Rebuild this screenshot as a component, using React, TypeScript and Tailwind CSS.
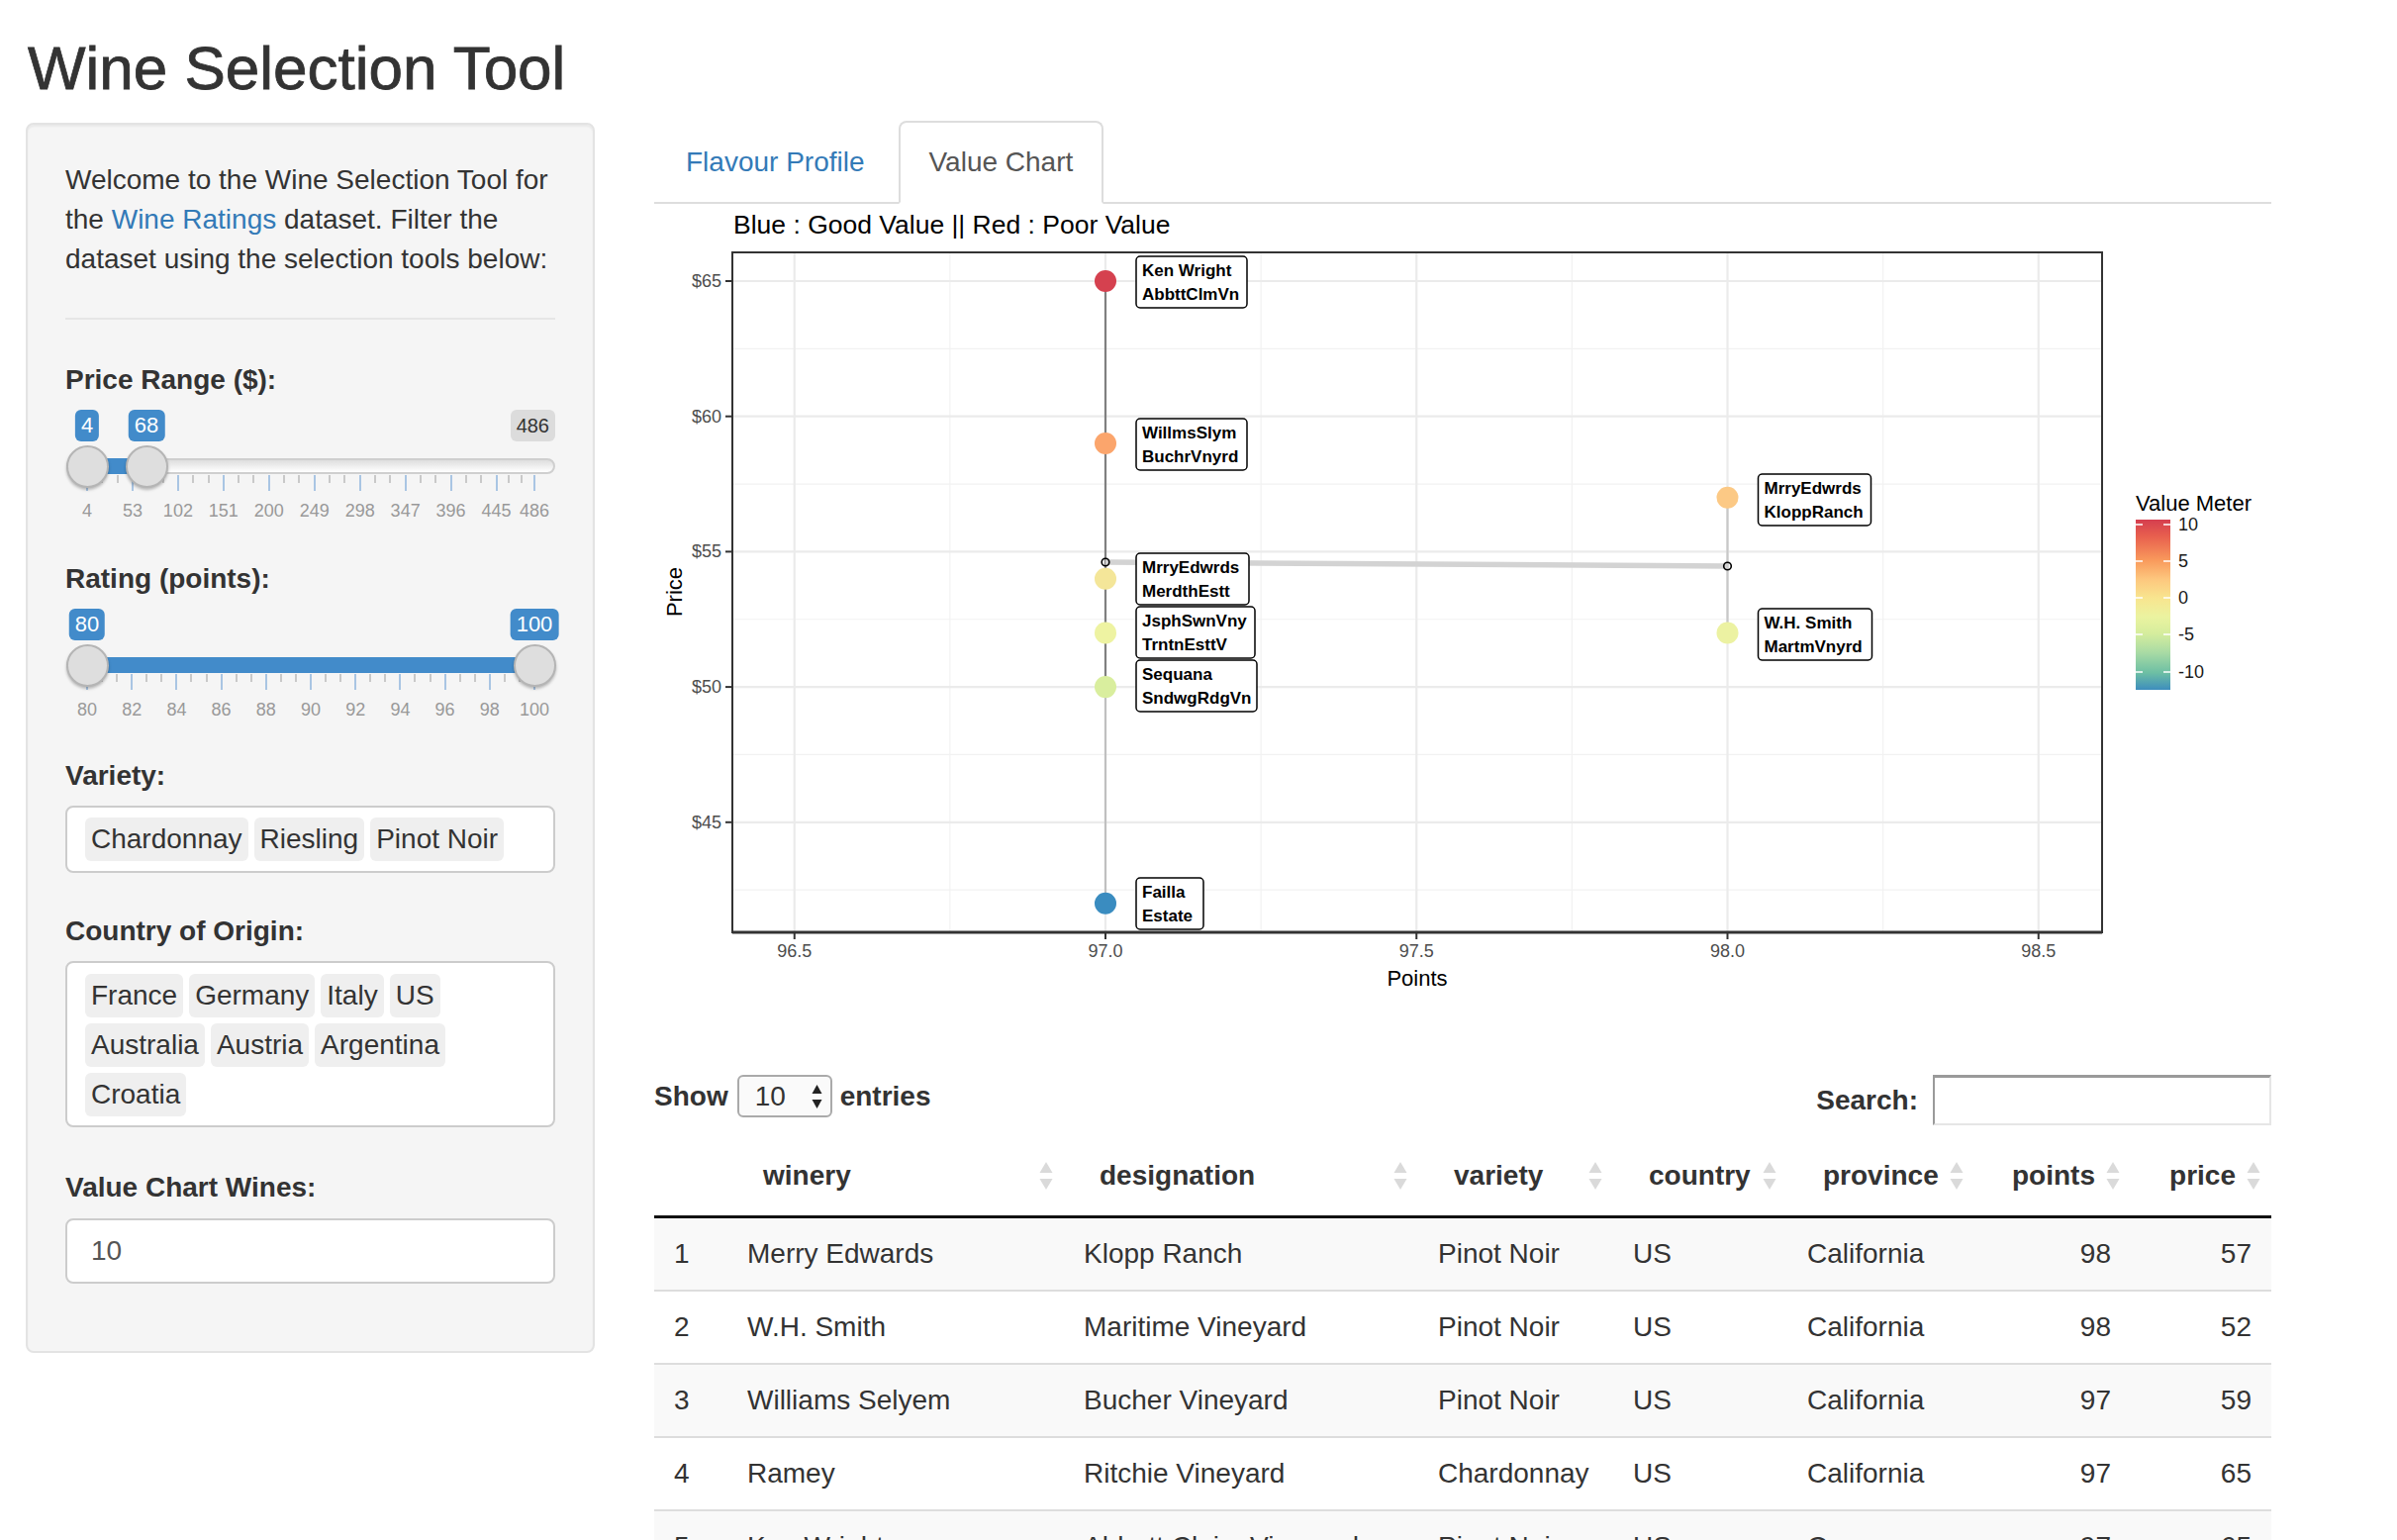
import React from "react";

function Handle({ left }: { left: number }) {
  return (
    <div
      className="absolute top-[36px] w-[43px] h-[43px] rounded-full bg-[#dedede] border-2 border-[#b5b5b5] shadow-[0_2px_3px_rgba(0,0,0,0.25)]"
      style={{ left: left - 21.5 }}
    />
  );
}

function RangeSlider({
  min,
  max,
  from,
  to,
  ticks,
  showMax,
}: {
  min: number;
  max: number;
  from: number;
  to: number;
  ticks: number[];
  showMax?: boolean;
}) {
  const pos = (v: number) => 22 + ((v - min) / (max - min)) * 452;
  const smalls: number[] = [];
  for (let i = 0; i < ticks.length - 1; i++) {
    const a = pos(ticks[i]);
    const b = pos(ticks[i + 1]);
    smalls.push(a + (b - a) / 3, a + (2 * (b - a)) / 3);
  }
  return (
    <div className="relative h-[120px] w-[495px]">
      <div className="absolute left-[1px] w-[494px] top-[49px] h-[16px] rounded-full border-2 border-[#cfcfcf] bg-linear-to-b from-[#dedede] to-white" />
      <div
        className="absolute top-[49px] h-[16px] bg-[#428bca]"
        style={{ left: pos(from), width: pos(to) - pos(from) }}
      />
      {ticks.map((t) => (
        <div
          key={"b" + t}
          className="absolute top-[66px] h-[16px] w-[2px] bg-[#a9c5e3]"
          style={{ left: pos(t) - 1 }}
        />
      ))}
      {smalls.map((s, i) => (
        <div
          key={"s" + i}
          className="absolute top-[66px] h-[8px] w-[2px] bg-[#c9c9c9]"
          style={{ left: s - 1 }}
        />
      ))}
      {showMax && (
        <div className="absolute top-0 right-0 h-[32px] px-[6px] rounded-[6px] bg-[rgba(0,0,0,0.1)] text-[#333] text-[20px] leading-[32px]">
          {max}
        </div>
      )}
      <div
        className="absolute top-0 h-[32px] px-[6px] rounded-[6px] bg-[#428bca] text-white text-[22px] leading-[32px] -translate-x-1/2"
        style={{ left: pos(from) }}
      >
        {from}
      </div>
      <div
        className="absolute top-0 h-[32px] px-[6px] rounded-[6px] bg-[#428bca] text-white text-[22px] leading-[32px] -translate-x-1/2"
        style={{ left: pos(to) }}
      >
        {to}
      </div>
      <Handle left={pos(from)} />
      <Handle left={pos(to)} />
      {ticks.map((t) => (
        <div
          key={"l" + t}
          className="absolute top-[91px] text-[18px] leading-[22px] text-[#999] -translate-x-1/2"
          style={{ left: pos(t) }}
        >
          {t}
        </div>
      ))}
    </div>
  );
}

function Chip({ children }: { children: React.ReactNode }) {
  return (
    <span className="inline-block bg-[#efefef] rounded-[6px] px-[6px] py-[2px] mr-[6px] mb-[6px] leading-[40px] text-[#333]">
      {children}
    </span>
  );
}

function Label({ children, mb }: { children: React.ReactNode; mb: string }) {
  return <div className={"font-bold h-[40px] " + mb}>{children}</div>;
}

function Sidebar() {
  return (
    <div className="mt-[2px] w-[575px] shrink-0 bg-[#f5f5f5] border-2 border-[#e3e3e3] rounded-[8px] shadow-[inset_0_2px_2px_rgba(0,0,0,0.05)] px-[38px] pt-[36px] pb-[68px]">
      <p>
        Welcome to the Wine Selection Tool for the{" "}
        <span className="text-[#337ab7]">Wine Ratings</span> dataset. Filter
        the dataset using the selection tools below:
      </p>
      <hr className="mt-[39px] mb-[41px] border-0 border-t-2 border-[#e6e6e6]" />
      <Label mb="mb-[10px]">Price Range ($):</Label>
      <div className="mb-[31px]">
        <RangeSlider
          min={4}
          max={486}
          from={4}
          to={68}
          ticks={[4, 53, 102, 151, 200, 249, 298, 347, 396, 445, 486]}
          showMax
        />
      </div>
      <Label mb="mb-[10px]">Rating (points):</Label>
      <div className="mb-[29px]">
        <RangeSlider
          min={80}
          max={100}
          from={80}
          to={100}
          ticks={[80, 82, 84, 86, 88, 90, 92, 94, 96, 98, 100]}
        />
      </div>
      <Label mb="mb-[10px]">Variety:</Label>
      <div className="mb-[39px] border-2 border-[#ccc] rounded-[8px] bg-white pt-[10px] pb-[4px] pl-[18px] pr-[14px] flex flex-wrap">
        <Chip>Chardonnay</Chip>
        <Chip>Riesling</Chip>
        <Chip>Pinot Noir</Chip>
      </div>
      <Label mb="mb-[10px]">Country of Origin:</Label>
      <div className="mb-[41px] border-2 border-[#ccc] rounded-[8px] bg-white pt-[11px] pb-[3px] pl-[18px] pr-[14px] flex flex-wrap">
        <Chip>France</Chip>
        <Chip>Germany</Chip>
        <Chip>Italy</Chip>
        <Chip>US</Chip>
        <Chip>Australia</Chip>
        <Chip>Austria</Chip>
        <Chip>Argentina</Chip>
        <Chip>Croatia</Chip>
      </div>
      <Label mb="mb-[11px]">Value Chart Wines:</Label>
      <div className="h-[66px] border-2 border-[#ccc] rounded-[8px] bg-white px-[24px] flex items-center text-[#555]">
        10
      </div>
    </div>
  );
}

function Tabs() {
  return (
    <div className="flex h-[84px] border-b-2 border-[#ddd]">
      <div className="h-[84px] mr-[2px] px-[30px] py-[20px] border-2 border-transparent rounded-t-[8px] text-[#337ab7]">
        Flavour Profile
      </div>
      <div className="h-[84px] px-[29px] py-[20px] border-2 border-[#ddd] border-b-white bg-white rounded-t-[8px] text-[#555]">
        Value Chart
      </div>
    </div>
  );
}

type Pt = {
  x: number;
  y: number;
  c: string;
  l1: string;
  l2: string;
  bt: number;
  bw: number;
};

function Chart() {
  const X = (p: number) => 456 + (p - 97) * 628.5;
  const Y = (v: number) => 78 + (65 - v) * 27.34;
  const L = 79,
    R = 1463,
    T = 49,
    B = 736;
  const majorX = [96.5, 97, 97.5, 98, 98.5];
  const minorX = [96.75, 97.25, 97.75, 98.25];
  const majorY = [45, 50, 55, 60, 65];
  const minorY = [42.5, 47.5, 52.5, 57.5, 62.5];
  const pts: Pt[] = [
    { x: 97, y: 65, c: "#d5414f", l1: "Ken Wright", l2: "AbbttClmVn", bt: 53, bw: 112 },
    { x: 97, y: 59, c: "#fba56c", l1: "WillmsSlym", l2: "BuchrVnyrd", bt: 217, bw: 112 },
    { x: 97, y: 54, c: "#f4e699", l1: "MrryEdwrds", l2: "MerdthEstt", bt: 353, bw: 114 },
    { x: 97, y: 52, c: "#eef3a2", l1: "JsphSwnVny", l2: "TrntnEsttV", bt: 407, bw: 120 },
    { x: 97, y: 50, c: "#d9ee9e", l1: "Sequana", l2: "SndwgRdgVn", bt: 461, bw: 122 },
    { x: 97, y: 42, c: "#3a8cc0", l1: "Failla", l2: "Estate", bt: 681, bw: 68 },
    { x: 98, y: 57, c: "#fcc985", l1: "MrryEdwrds", l2: "KloppRanch", bt: 273, bw: 114 },
    { x: 98, y: 52, c: "#ecf2a2", l1: "W.H. Smith", l2: "MartmVnyrd", bt: 409, bw: 115 },
  ];
  const legend = [
    { v: "10", y: 324 },
    { v: "5", y: 361 },
    { v: "0", y: 398 },
    { v: "-5", y: 435 },
    { v: "-10", y: 473 },
  ];
  return (
    <svg width={1634} height={834} className="block">
      <defs>
        <linearGradient id="spectral" x1="0" y1="0" x2="0" y2="1">
          <stop offset="0%" stopColor="#d53e4f" />
          <stop offset="10%" stopColor="#e8604e" />
          <stop offset="24%" stopColor="#f99a5c" />
          <stop offset="35%" stopColor="#fdc77e" />
          <stop offset="46%" stopColor="#f8e58f" />
          <stop offset="57%" stopColor="#ebf3a0" />
          <stop offset="67%" stopColor="#d5ed9d" />
          <stop offset="78%" stopColor="#a9dba4" />
          <stop offset="90%" stopColor="#6dbfa4" />
          <stop offset="100%" stopColor="#3d8dbd" />
        </linearGradient>
      </defs>
      <text x={80} y={30} fontSize={26.5} fill="#000">
        Blue : Good Value || Red : Poor Value
      </text>
      <rect x={L} y={T} width={R - L} height={B - T} fill="#fff" />
      {minorX.map((v) => (
        <line key={"mx" + v} x1={X(v)} x2={X(v)} y1={T} y2={B} stroke="#f2f2f2" strokeWidth={1.2} />
      ))}
      {minorY.map((v) => (
        <line key={"my" + v} x1={L} x2={R} y1={Y(v)} y2={Y(v)} stroke="#f2f2f2" strokeWidth={1.2} />
      ))}
      {majorX.map((v) => (
        <line key={"Mx" + v} x1={X(v)} x2={X(v)} y1={T} y2={B} stroke="#ebebeb" strokeWidth={2.2} />
      ))}
      {majorY.map((v) => (
        <line key={"My" + v} x1={L} x2={R} y1={Y(v)} y2={Y(v)} stroke="#ebebeb" strokeWidth={2.2} />
      ))}
      <line x1={X(97)} x2={X(97)} y1={Y(65)} y2={Y(50)} stroke="#808080" strokeWidth={2.2} />
      <line x1={X(97)} x2={X(97)} y1={Y(50)} y2={Y(42)} stroke="#c0c0c0" strokeWidth={2.2} />
      <line x1={X(98)} x2={X(98)} y1={Y(57)} y2={Y(52)} stroke="#c8c8c8" strokeWidth={2.2} />
      <line x1={X(97)} x2={X(98)} y1={362} y2={366} stroke="#d3d3d3" strokeWidth={5.5} />
      <circle cx={X(97)} cy={362} r={3.8} fill="none" stroke="#000" strokeWidth={1.6} />
      <circle cx={X(98)} cy={366} r={3.8} fill="none" stroke="#000" strokeWidth={1.6} />
      {pts.map((p, i) => (
        <circle key={"p" + i} cx={X(p.x)} cy={Y(p.y)} r={11} fill={p.c} />
      ))}
      {pts.map((p, i) => {
        const bx = X(p.x) + 31;
        return (
          <g key={"lb" + i}>
            <rect x={bx} y={p.bt} width={p.bw} height={52} rx={4} fill="#fff" stroke="#000" strokeWidth={1.5} />
            <text x={bx + 6} y={p.bt + 20} fontSize={17} fontWeight="bold" fill="#000">
              {p.l1}
            </text>
            <text x={bx + 6} y={p.bt + 44} fontSize={17} fontWeight="bold" fill="#000">
              {p.l2}
            </text>
          </g>
        );
      })}
      <rect x={L} y={T} width={R - L} height={B - T} fill="none" stroke="#333" strokeWidth={2} />
      <line x1={L} x2={R} y1={B} y2={B} stroke="#333" strokeWidth={3} />
      {majorY.map((v) => (
        <g key={"yt" + v}>
          <line x1={72} x2={L} y1={Y(v)} y2={Y(v)} stroke="#333" strokeWidth={2} />
          <text x={68} y={Y(v)} fontSize={18} fill="#4d4d4d" textAnchor="end" dominantBaseline="central">
            ${v}
          </text>
        </g>
      ))}
      {majorX.map((v) => (
        <g key={"xt" + v}>
          <line x1={X(v)} x2={X(v)} y1={B} y2={B + 7} stroke="#333" strokeWidth={2} />
          <text x={X(v)} y={755} fontSize={18} fill="#4d4d4d" textAnchor="middle" dominantBaseline="central">
            {v.toFixed(1)}
          </text>
        </g>
      ))}
      <text x={771} y={782} fontSize={22} fill="#000" textAnchor="middle" dominantBaseline="central">
        Points
      </text>
      <text
        transform="translate(20,392) rotate(-90)"
        fontSize={22}
        fill="#000"
        textAnchor="middle"
        dominantBaseline="central"
      >
        Price
      </text>
      <text x={1497} y={302} fontSize={22} fill="#000" dominantBaseline="central">
        Value Meter
      </text>
      <rect x={1497} y={319} width={35} height={172} fill="url(#spectral)" />
      {legend.map((l) => (
        <g key={"lg" + l.v}>
          <line x1={1497} x2={1504} y1={l.y} y2={l.y} stroke="#fff" strokeWidth={1.5} />
          <line x1={1525} x2={1532} y1={l.y} y2={l.y} stroke="#fff" strokeWidth={1.5} />
          <text x={1540} y={l.y} fontSize={18} fill="#1a1a1a" dominantBaseline="central">
            {l.v}
          </text>
        </g>
      ))}
    </svg>
  );
}

function SortIcon() {
  return (
    <svg width="16" height="32" viewBox="0 0 16 32" className="shrink-0">
      <path d="M8 2 L14.5 13 L1.5 13 Z" fill="#dadada" />
      <path d="M8 30 L14.5 19 L1.5 19 Z" fill="#dadada" />
    </svg>
  );
}

function Th({ label, right }: { label: string; right?: boolean }) {
  return (
    <th className={"h-[80px] py-[20px] pr-[10px] font-bold align-middle " + (right ? "pl-[10px]" : "pl-[36px]")}>
      <div className={"flex items-center " + (right ? "justify-end gap-[10px]" : "justify-between")}>
        <span className="leading-[40px]">{label}</span>
        <SortIcon />
      </div>
    </th>
  );
}

const rows = [
  ["1", "Merry Edwards", "Klopp Ranch", "Pinot Noir", "US", "California", "98", "57"],
  ["2", "W.H. Smith", "Maritime Vineyard", "Pinot Noir", "US", "California", "98", "52"],
  ["3", "Williams Selyem", "Bucher Vineyard", "Pinot Noir", "US", "California", "97", "59"],
  ["4", "Ramey", "Ritchie Vineyard", "Chardonnay", "US", "California", "97", "65"],
  ["5", "Ken Wright", "Abbott Claim Vineyard", "Pinot Noir", "US", "Oregon", "97", "65"],
];

function DataTable() {
  return (
    <div className="mt-[46px]">
      <div className="flex justify-between items-start">
        <div className="flex items-center h-[43px] font-bold">
          <span>Show</span>
          <div className="ml-[9px] mr-[8px] w-[96px] h-[43px] border-2 border-[#aaa] rounded-[6px] bg-[#fafafa] flex items-center justify-between pl-[16px] pr-[7px] font-normal">
            <span>10</span>
            <svg width="13" height="26" viewBox="0 0 13 26">
              <path d="M6.5 1 L11.5 10 L1.5 10 Z" fill="#222" />
              <path d="M6.5 25 L11.5 16 L1.5 16 Z" fill="#222" />
            </svg>
          </div>
          <span>entries</span>
        </div>
        <div className="flex items-center h-[51px] font-bold">
          <span>Search:</span>
          <div className="ml-[15px] w-[342px] h-[51px] bg-white border-2 border-t-[3px] border-t-[#9a9a9a] border-l-[#9a9a9a] border-r-[#e6e6e6] border-b-[#e6e6e6]" />
        </div>
      </div>
      <table className="mt-[11px] w-[1634px] table-fixed">
        <colgroup>
          <col className="w-[74px]" />
          <col className="w-[340px]" />
          <col className="w-[358px]" />
          <col className="w-[197px]" />
          <col className="w-[176px]" />
          <col className="w-[189px]" />
          <col className="w-[158px]" />
          <col className="w-[142px]" />
        </colgroup>
        <thead>
          <tr className="border-b-[3px] border-[#111] text-left">
            <th className="h-[80px]" />
            <Th label="winery" />
            <Th label="designation" />
            <Th label="variety" />
            <Th label="country" />
            <Th label="province" />
            <Th label="points" right />
            <Th label="price" right />
          </tr>
        </thead>
        <tbody>
          {rows.map((r, i) => (
            <tr
              key={r[0]}
              className={(i % 2 === 0 ? "bg-[#f9f9f9] " : "bg-white ") + (i > 0 ? "border-t-2 border-[#ddd]" : "")}
            >
              {r.map((c, j) => (
                <td
                  key={j}
                  className={"px-[20px] py-[16px] leading-[40px] whitespace-nowrap " + (j >= 6 ? "text-right" : "text-left")}
                >
                  {c}
                </td>
              ))}
            </tr>
          ))}
        </tbody>
      </table>
    </div>
  );
}

function Main() {
  return (
    <div className="ml-[60px] w-[1634px] shrink-0">
      <Tabs />
      <Chart />
      <DataTable />
    </div>
  );
}

export default function App() {
  return (
    <div className="w-[2422px] min-h-[1556px] bg-white text-[#333] text-[28px] leading-[40px] font-['Liberation_Sans',Arial,sans-serif]">
      <div className="pl-[26px] pt-[36px]">
        <h2 className="pl-[2px] h-[66px] text-[62px] leading-[66px] font-normal text-[#333] [-webkit-text-stroke:0.8px_#333]">
          Wine Selection Tool
        </h2>
        <div className="mt-[20px] flex items-start">
          <Sidebar />
          <Main />
        </div>
      </div>
    </div>
  );
}
